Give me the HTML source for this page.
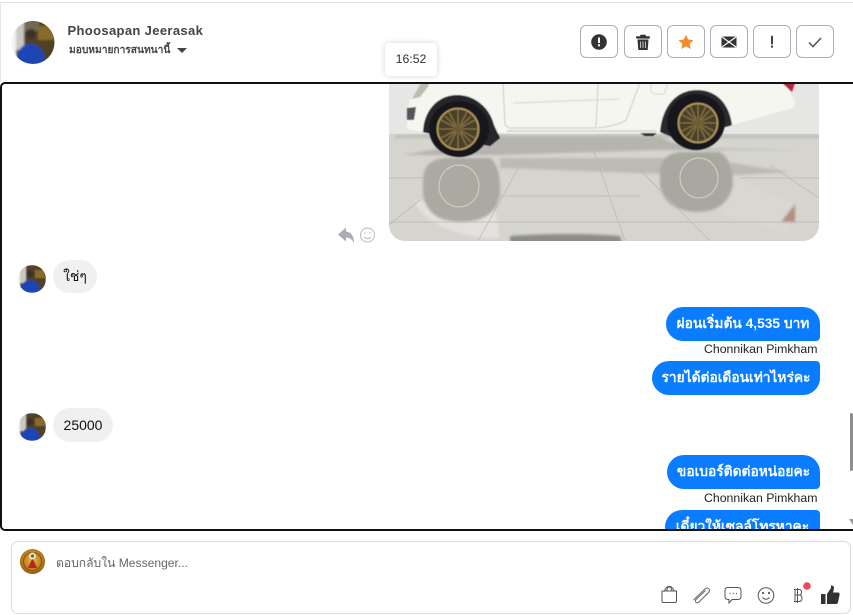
<!DOCTYPE html>
<html><head><meta charset="utf-8"><style>
*{box-sizing:border-box}
html,body{margin:0;padding:0;width:853px;height:615px;overflow:hidden;background:#fff;font-family:"Liberation Sans",sans-serif}
.a{position:absolute}
.btn{position:absolute;top:25px;width:38px;height:33px;border:1px solid #aab0b6;border-radius:6px;background:#fff}
.btn svg{position:absolute;left:8px;top:6px;width:20px;height:20px}
.b{position:absolute;height:34px;background:#0a7cff;color:#fff;font-weight:bold;font-size:13.750px;line-height:34px;white-space:nowrap;text-align:center}
.g{position:absolute;height:34px;background:#f0f0f0;color:#111;font-size:14px;line-height:34px;border-radius:17px;text-align:center}
.n{position:absolute;font-size:12.300px;color:#222;white-space:nowrap;line-height:14px}
</style></head><body>
<div class="a" style="left:0;top:2px;width:853px;height:1px;background:#e2e2e2"></div>
<div class="a" style="left:0;top:2px;width:1px;height:80px;background:#e6e6e6"></div>

<svg class="a" style="left:10px;top:18px" width="48" height="48" viewBox="0 0 48 48"><defs><clipPath id="c1"><circle cx="23" cy="24.500" r="21.500"/></clipPath><filter id="bl" x="-20%" y="-20%" width="140%" height="140%"><feGaussianBlur stdDeviation="1"/></filter></defs><g clip-path="url(#c1)"><g filter="url(#bl)"><rect width="48" height="48" fill="#4f4126"/><rect x="0" y="0" width="6" height="48" fill="#f4f4f2"/><rect x="6" y="2" width="8" height="30" fill="#c9c9c2"/><rect x="28" y="8" width="16" height="14" fill="#8a6a2a"/><rect x="14" y="3" width="15" height="10" fill="#6f6a52"/><circle cx="21" cy="16" r="5" fill="#3b3026"/><path d="M6 46C7 30 13 26 20 26S34 30 36 46Z" fill="#1f45b5"/></g></g></svg>
<div class="a" style="left:67.500px;top:23px;font-size:13px;font-weight:bold;color:#444;line-height:15px;white-space:nowrap;letter-spacing:.35px">Phoosapan Jeerasak</div>
<div class="a" style="left:69px;top:44px;font-size:10.200px;font-weight:bold;color:#444;line-height:13px;white-space:nowrap">มอบหมายการสนทนานี้</div>
<div class="a" style="left:176.500px;top:48px;width:0;height:0;border-left:5px solid transparent;border-right:5px solid transparent;border-top:5px solid #444"></div>

<div class="btn" style="left:580px"><svg viewBox="0 0 20 20"><circle cx="10" cy="10" r="7.800" fill="#333"/><rect x="9" y="5.500" width="2" height="5.500" fill="#fff"/><rect x="9" y="12.300" width="2" height="2" fill="#fff"/></svg></div>
<div class="btn" style="left:624px"><svg viewBox="0 0 20 20"><path d="M3.500 4.500H16.500V6.300H3.500ZM7.500 4.500V3H12.500V4.500" fill="#333" stroke="#333" stroke-width=".6"/><path d="M4.500 7.500H15.500L14.700 18H5.300Z" fill="#333"/><path d="M7.700 9.500V16M10 9.500V16M12.300 9.500V16" stroke="#fff" stroke-width=".7"/></svg></div>
<div class="btn" style="left:667px"><svg viewBox="0 0 20 20"><path d="M10 2.800L12.300 7.500 17.500 8.200 13.700 11.700 14.700 17 10 14.400 5.300 17 6.300 11.700 2.500 8.200 7.700 7.500Z" fill="#f68b2c"/></svg></div>
<div class="btn" style="left:710px"><svg viewBox="0 0 20 20"><rect x="2.500" y="4.500" width="15" height="11" rx="1" fill="#333"/><path d="M3 5L17 15M17 5L3 15" stroke="#fff" stroke-width="1.100"/></svg></div>
<div class="btn" style="left:753px"><svg viewBox="0 0 20 20"><rect x="9" y="3.800" width="2" height="8.500" fill="#444"/><rect x="9" y="13.500" width="2" height="2.200" fill="#444"/></svg></div>
<div class="btn" style="left:796px"><svg viewBox="0 0 20 20"><path d="M4 10.500L8 14.500 16 6" fill="none" stroke="#555" stroke-width="1.500"/></svg></div>

<div class="a" style="left:0;top:82px;width:853px;height:449px;border:2px solid #111;border-right:none;border-radius:5px 0 0 5px;overflow:hidden">
  <svg class="a" style="left:-2px;top:-2px" width="853" height="449" viewBox="0 82 853 449">
    <defs><clipPath id="ph"><path d="M389 83H819V225A16 16 0 0 1 803 241H405A16 16 0 0 1 389 225Z"/></clipPath><filter id="sf" x="-5%" y="-5%" width="110%" height="110%"><feGaussianBlur stdDeviation=".6"/></filter><filter id="sf2" x="-5%" y="-5%" width="110%" height="110%"><feGaussianBlur stdDeviation="1.200"/></filter></defs>
    <g clip-path="url(#ph)">
      <rect x="389" y="83" width="430" height="55" fill="#e6e6e4"/>
      <rect x="389" y="134" width="430" height="107" fill="#d5d4cf"/>
      <g filter="url(#sf2)">
        <path d="M403 155L500 138H660L690 148 800 150H660L500 155Z" fill="#b5b4ae"/>
        <path d="M395 135H819V138H395Z" fill="#bdbcb5"/>
        <path d="M500 158H700L790 172 720 176 500 168Z" fill="#bcbbb3"/>
        <path d="M415 200C420 225 470 240 500 238L495 210Z" fill="#e2e1dd"/>
        <path d="M730 175L795 205 790 235 720 215Z" fill="#d8d7d2"/>
        <path d="M423 180Q423 160 445 158H490Q501 165 500 195 495 222 461 222 428 222 423 195Z" fill="#aba9a1"/>
        <path d="M660 170Q662 154 680 152H720Q733 160 733 185 728 212 696 212 664 210 660 185Z" fill="#a9a8a0"/>
        <path d="M510 236Q570 232 620 236L622 243H510Z" fill="#8d8c86"/>
        <path d="M781 222L795 204 795 222Z" fill="#b58f80"/>
      </g>
      <path d="M389 178H423M740 178H819M500 196H640M389 222H819M520 165L478 241M590 140L625 241M770 165L819 198M640 170L710 241M389 225L420 200" stroke="#b8b7b1" stroke-width=".7" fill="none"/>
      <ellipse cx="459" cy="186" rx="20" ry="21" fill="none" stroke="#d2ccbd" stroke-width="1.200"/>
      <ellipse cx="699" cy="178" rx="19" ry="20" fill="none" stroke="#d2ccbd" stroke-width="1.200"/>
      <g filter="url(#sf)">
      <path d="M427 83L410 100 407 110 407 129 423 132 450 133 657 133 732 125 793 108 795 102 785 83Z" fill="#f6f6f1"/>
      <path d="M421 83L412 99 420 97 428 87 429 83Z" fill="#bcbbb0"/>
      <path d="M407 108L416 107 414 120 407 120Z" fill="#55575c"/>
      <path d="M503 83L505 125 509 128 596 128 598 83M598 128Q620 125 626 120L640 83" fill="none" stroke="#c4c4ba" stroke-width=".9"/>
      <path d="M513 103L620 99" stroke="#dedfd8" stroke-width="1.500"/>
      <path d="M651 83V90Q652 94 656 94H664L668 83" fill="none" stroke="#d8d8d0"/>
      <path d="M782 83L795 83 792 92Z" fill="#b3253f"/>
      <path d="M507 131H657" stroke="#cfcfc6" stroke-width="1.500"/>
      <path d="M423 132C424 108 440 95 457 95C475 95 490 108 494 125L500 138 490 146Z" fill="#26262a"/>
      <path d="M660 132C662 108 675 90 697 90C715 90 729 102 732 125L722 128 680 140Z" fill="#2a2a2e"/>
      <ellipse cx="459" cy="129" rx="30" ry="28" fill="#18181b"/>
      <ellipse cx="696" cy="122" rx="29" ry="28" fill="#18181b"/>
      <ellipse cx="458" cy="129" rx="20.500" ry="20.500" fill="#4a3f2a" stroke="#b39b5f" stroke-width="1.800"/>
      <ellipse cx="698" cy="123" rx="19.500" ry="19.500" fill="#4a3f2a" stroke="#b39b5f" stroke-width="1.800"/>
      <path d="M458 110V148M439 129H477M445 116L471 142M471 116L445 142M449 112L467 146M467 112L449 146M441 120L475 138M475 120L441 138" stroke="#8f7a45" stroke-width="1.100"/>
      <path d="M698 105V141M680 123H716M686 110L710 136M710 110L686 136M690 106L706 140M706 106L690 140M682 115L714 131M714 115L682 131" stroke="#8f7a45" stroke-width="1.100"/>
      <circle cx="458" cy="129" r="4" fill="#6d5d30"/><circle cx="698" cy="123" r="4" fill="#6d5d30"/>
      <path d="M640 133H657L653 136H645Z" fill="#333"/>
      </g>
    </g>
    <path d="M338 234.500L346 227.500V231.500C351 232 354 236 354 243C352 239 349 237.500 346 237.500V241.500Z" fill="#a9adb3"/>
    <circle cx="367.500" cy="235" r="7" fill="none" stroke="#b5b8bc" stroke-width="1"/>
    <circle cx="365" cy="233" r=".8" fill="#b5b8bc"/><circle cx="370" cy="233" r=".8" fill="#b5b8bc"/>
    <path d="M364 237Q367.500 240.500 371 237" fill="none" stroke="#b5b8bc" stroke-width=".9"/>
    <defs><clipPath id="c2"><circle cx="32" cy="279" r="14"/></clipPath><clipPath id="c3"><circle cx="32" cy="427" r="14"/></clipPath><filter id="av" x="-20%" y="-20%" width="140%" height="140%"><feGaussianBlur stdDeviation=".7"/></filter></defs>
    <g clip-path="url(#c2)"><g filter="url(#av)"><rect x="18" y="265" width="28" height="28" fill="#4f4126"/><rect x="16" y="263" width="4" height="32" fill="#f4f4f2"/><rect x="20" y="265" width="6" height="18" fill="#c9c9c2"/><rect x="35" y="270" width="10" height="8" fill="#8a6a2a"/><circle cx="30" cy="274" r="3.500" fill="#3b3026"/><path d="M20 293C21 283 25 280 30 280S39 283 41 293Z" fill="#1f45b5"/></g></g>
    <g clip-path="url(#c3)"><g filter="url(#av)"><rect x="18" y="413" width="28" height="28" fill="#4f4126"/><rect x="16" y="411" width="4" height="32" fill="#f4f4f2"/><rect x="20" y="413" width="6" height="18" fill="#c9c9c2"/><rect x="35" y="418" width="10" height="8" fill="#8a6a2a"/><circle cx="30" cy="422" r="3.500" fill="#3b3026"/><path d="M20 441C21 431 25 428 30 428S39 431 41 441Z" fill="#1f45b5"/></g></g>
    <rect x="850" y="413" width="3" height="58" rx="1.500" fill="#8f8f8f"/>
    <path d="M849 519H853V525Z" fill="#9a9a9a"/>
  </svg>
  <div class="g" style="left:51px;top:176px;width:44px;height:33px;line-height:33px">ใช่ๆ</div>
  <div class="g" style="left:51px;top:324px;width:60px;font-size:14px">25000</div>
  <div class="b" style="left:664px;top:223px;width:154px;border-radius:17px 17px 4px 17px">ผ่อนเริ่มต้น 4,535 บาท</div>
  <div class="n" style="top:258px;left:702px">Chonnikan Pimkham</div>
  <div class="b" style="left:650px;top:277px;width:168px;border-radius:17px 4px 17px 17px">รายได้ต่อเดือนเท่าไหร่คะ</div>
  <div class="b" style="left:665px;top:371px;width:153px;border-radius:17px 17px 4px 17px">ขอเบอร์ติดต่อหน่อยคะ</div>
  <div class="n" style="top:407px;left:702px">Chonnikan Pimkham</div>
  <div class="b" style="left:663px;top:426px;width:155px;border-radius:17px 4px 17px 17px">เดี๋ยวให้เซลล์โทรหาคะ</div>
</div>

<div class="a" style="left:385px;top:43px;width:52px;height:33px;background:#fff;border-radius:4px;box-shadow:0 0 6px rgba(0,0,0,.18);font-size:12.300px;color:#333;line-height:33px;text-align:center">16:52</div>

<div class="a" style="left:11px;top:541px;width:840px;height:73px;border:1px solid #dcdcdc;border-radius:7px;background:#fff"></div>
<svg class="a" style="left:19px;top:548px" width="27" height="27" viewBox="0 0 27 27"><defs><radialGradient id="lg" cx=".5" cy=".45" r=".6"><stop offset="0" stop-color="#e6b64a"/><stop offset=".7" stop-color="#b87a18"/><stop offset="1" stop-color="#6e4408"/></radialGradient></defs><circle cx="13.500" cy="13.500" r="12.500" fill="url(#lg)"/><circle cx="13.500" cy="13.500" r="9" fill="none" stroke="#8a4d10" stroke-width="1"/><path d="M13.500 10L18 20H9Z" fill="#b8261c"/><circle cx="13.500" cy="8" r="3.500" fill="#e9e4c4"/><circle cx="13.500" cy="8" r="1.600" fill="#3f7a3a"/></svg>
<div class="a" style="left:56px;top:556px;font-size:12.100px;color:#65676b;line-height:15px;white-space:nowrap">ตอบกลับใน Messenger...</div>

<svg class="a" style="left:655px;top:580px" width="198" height="30" viewBox="0 0 198 30" fill="none" stroke="#555" stroke-width="1">
  <path d="M7 11H21.500V21Q21.500 22.500 20 22.500H8.500Q7 22.500 7 21ZM9 11L12 7H16.500L19.500 11M11.500 11L13 6.500H15.500L17 11"/>
  <path d="M38.500 20L50 9C53 6.500 56 9.500 53.500 12.500L44 22C42 24 39 21.500 41 19.500L50.500 10.500" stroke="#666"/>
  <path d="M73 7.500H83Q86 7.500 86 10.500V16.500Q86 19.500 83 19.500H77L74 23V19.500H73Q70 19.500 70 16.500V10.500Q70 7.500 73 7.500Z"/>
  <path d="M74.500 13.500H75.500M77.700 13.500H78.700M80.900 13.500H81.900" stroke-width="1.300"/>
  <circle cx="111" cy="15.500" r="7.800"/><path d="M107.500 17.500Q111 21 114.500 17.500"/><circle cx="108" cy="13" r=".6" fill="#555"/><circle cx="114" cy="13" r=".6" fill="#555"/>
  <path d="M142.500 8V23M140 9.500V21.500M139 9.500H144Q146.500 9.500 146.500 12.300 146.500 15 144 15H140M144 15Q147 15 147 18.200 147 21.500 144 21.500H139"/>
  <circle cx="152" cy="6" r="3.800" fill="#f2475a" stroke="none"/>
  <path d="M166 14H170.500V24H166ZM172 14L176 8V5.500Q179 5 179 8.500L178 12.500H183.500Q185 13 184.500 15L183 22.500Q182.500 24 181 24H172Z" fill="#333" stroke="none"/>
</svg>
</body></html>
